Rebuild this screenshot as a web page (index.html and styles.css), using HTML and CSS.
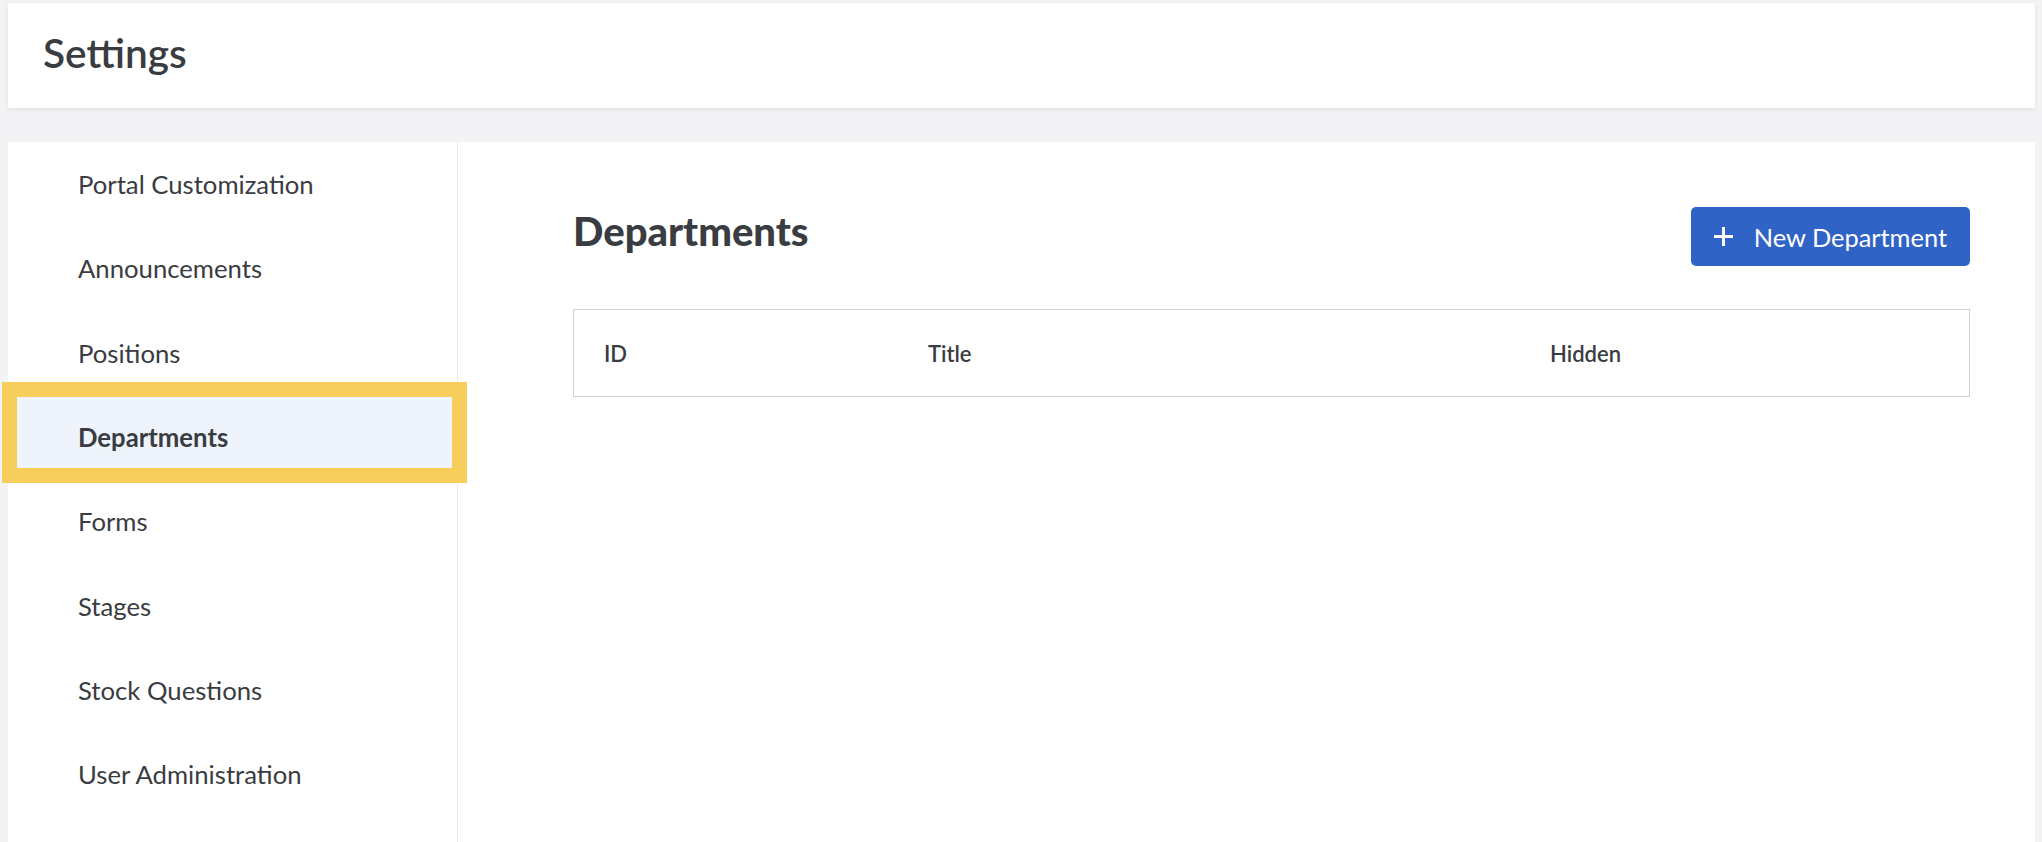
FILE: index.html
```html
<!DOCTYPE html>
<html lang="en">
<head>
<meta charset="utf-8">
<title>Settings</title>
<link rel="stylesheet" href="styles.css">
</head>
<body>
  <header class="page-header">
    <h1 class="page-title">Settings</h1>
  </header>
  <main class="settings-card">
    <nav class="side-nav">
      <a class="nav-item">Portal Customization</a>
      <a class="nav-item">Announcements</a>
      <a class="nav-item">Positions</a>
      <a class="nav-item is-active">Departments</a>
      <a class="nav-item">Forms</a>
      <a class="nav-item">Stages</a>
      <a class="nav-item">Stock Questions</a>
      <a class="nav-item">User Administration</a>
    </nav>
    <section class="content">
      <div class="content-head">
        <h2 class="content-title">Departments</h2>
        <button class="btn-primary" type="button">
          <svg class="btn-icon" viewBox="0 0 19 19" aria-hidden="true">
            <path d="M9.5 0v19M0 9.5h19" stroke="#fff" stroke-width="3" fill="none"/>
          </svg>
          <span>New Department</span>
        </button>
      </div>
      <div class="table">
        <div class="table-head">
          <div class="th">ID</div>
          <div class="th">Title</div>
          <div class="th">Hidden</div>
        </div>
      </div>
    </section>
  </main>
</body>
</html>
```
FILE: styles.css
```css
html, body {
  margin: 0;
  padding: 0;
}
body {
  background: #f3f3f6;
  padding: 3px 7px 0 8px;
  font-family: "Lato", "Liberation Sans", sans-serif;
  color: #393c41;
  height: 842px;
  box-sizing: border-box;
  overflow: hidden;
}
.page-header {
  background: #ffffff;
  height: 105px;
  box-shadow: 0 2px 5px rgba(0, 0, 0, 0.07);
  display: flex;
  align-items: center;
  padding-left: 35px;
}
.page-title {
  margin: 0;
  font-size: 40.6px;
  font-weight: 600;
  line-height: 1;
  color: #393c41;
  position: relative;
  top: -2px;
}
.settings-card {
  margin-top: 34px;
  background: #ffffff;
  display: flex;
  height: 720px;
}
.side-nav {
  width: 449px;
  border-right: 1px solid #ebebee;
  display: flex;
  flex-direction: column;
}
.nav-item {
  height: 84.3px;
  display: flex;
  align-items: center;
  padding-left: 70px;
  font-size: 25.7px;
  color: #393c41;
  position: relative;
}
.nav-item.is-active {
  background: #eff4fc;
  font-weight: 700;
}
.nav-item.is-active::after {
  content: "";
  position: absolute;
  left: -6px;
  right: -10px;
  top: -13px;
  bottom: -4px;
  border: 15px solid #f7cd5b;
  pointer-events: none;
}
.content {
  flex: 1;
  padding: 65px 65px 0 115px;
}
.content-head {
  display: flex;
  justify-content: space-between;
  align-items: center;
}
.content-title {
  margin: 0;
  font-size: 40px;
  font-weight: 900;
  line-height: 1;
  color: #393c41;
  position: relative;
  top: -6px;
}
.btn-primary {
  height: 59px;
  display: flex;
  align-items: center;
  gap: 21px;
  padding: 0 23px;
  background: #3063c6;
  border: none;
  border-radius: 5px;
  color: #ffffff;
  font-family: "Lato", "Liberation Sans", sans-serif;
  font-size: 25.4px;
  font-weight: 400;
}
.btn-icon {
  width: 19px;
  height: 19px;
  display: block;
}
.table {
  margin-top: 43px;
  border: 1px solid #d2d2d2;
}
.table-head {
  display: grid;
  grid-template-columns: 324px 622px 1fr;
  height: 86px;
  align-items: center;
}
.th {
  padding-left: 30px;
  font-size: 22px;
  font-weight: 600;
  color: #393c41;
}
```
